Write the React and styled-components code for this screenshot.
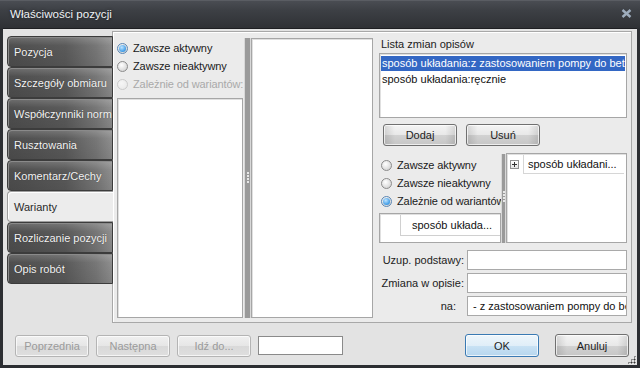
import React from "react";
import styled, { createGlobalStyle, css } from "styled-components";

const Global = createGlobalStyle`
  html, body { margin: 0; padding: 0; background: #2b2d31; }
  body { font-family: "Liberation Sans", Arial, sans-serif; font-size: 11px; }
  * { box-sizing: border-box; }
`;

const Window = styled.div`
  width: 640px;
  height: 368px;
  background: #2c2e32;
  display: flex;
  flex-direction: column;
  position: relative;
  overflow: hidden;
`;

const TitleBar = styled.div`
  height: 28px;
  flex: none;
  display: flex;
  align-items: center;
  justify-content: space-between;
  padding: 0 8px 2px 10px;
  background: linear-gradient(to bottom, #6a6d73 0px, #4a4d53 1px, #3d4045 10px, #2f3135 28px);
`;

const Title = styled.div`
  color: #eef2f6;
  font-size: 11.6px;
  text-shadow: 0 0 3px rgba(0, 0, 0, 0.6);
`;

const Body = styled.div`
  flex: 1;
  margin: 0 3px 3px 3px;
  background: #e3e3e3;
  border-top: 1px solid #1e1f22;
  display: flex;
  flex-direction: column;
  position: relative;
`;

const MainRow = styled.div`
  display: flex;
  padding: 2px 5px 0 4px;
  height: 295px;
`;

const Tabs = styled.div`
  width: 106px;
  flex: none;
  margin-top: 5px;
  margin-right: -1px;
  display: flex;
  flex-direction: column;
  position: relative;
  z-index: 2;
`;

const Tab = styled.div`
  height: 31px;
  display: flex;
  align-items: center;
  padding-left: 6px;
  border-radius: 4px 0 0 4px;
  font-size: 11px;
  white-space: nowrap;
  overflow: hidden;
  ${(p) =>
    p.$active
      ? css`
          background: #ececec;
          color: #2a2a2a;
          border: 1px solid #9e9e9e;
          border-right: none;
          box-shadow: inset 1px 1px 0 #ffffff;
        `
      : css`
          color: #f4f4f4;
          border: 1px solid #3c3c3c;
          background: linear-gradient(to bottom, rgba(255, 255, 255, 0.18), rgba(255, 255, 255, 0) 30%, rgba(0, 0, 0, 0.08) 100%),
            linear-gradient(to right, #4e4e4e 0%, #5a5a5a 55%, #777 85%, #8e8e8e 100%);
          box-shadow: inset 1px 1px 0 #8a8a8a;
          text-shadow: 0 0 1px rgba(0, 0, 0, 0.5);
        `}
`;

const Panel = styled.div`
  flex: 1;
  min-width: 0;
  height: 292px;
  background: #ebebeb;
  border: 1px solid #a8a8a8;
  box-shadow: inset 1px 1px 0 #ffffff;
  display: flex;
`;

const LeftCol = styled.div`
  width: 131px;
  flex: none;
  padding: 7px 0 4px 4px;
  display: flex;
  flex-direction: column;
`;

const RadioRow = styled.label`
  height: 18px;
  display: flex;
  align-items: center;
  gap: 5px;
  color: ${(p) => (p.$disabled ? "#a9a9a9" : "#1a1a1a")};
  white-space: nowrap;
  letter-spacing: -0.1px;
`;

const RadioCircle = styled.span`
  width: 11px;
  height: 11px;
  border-radius: 50%;
  flex: none;
  position: relative;
  border: 1px solid ${(p) => (p.$disabled ? "#cacaca" : "#8b8b8b")};
  background: ${(p) =>
    p.$disabled
      ? "radial-gradient(circle at 40% 35%, #f6f6f6, #e6e6e6)"
      : "radial-gradient(circle at 40% 35%, #ffffff, #d4d4d4 80%)"};
  ${(p) =>
    p.$checked &&
    css`
      border-color: #5a86b4;
      &::after {
        content: "";
        position: absolute;
        left: 1px;
        top: 1px;
        width: 7px;
        height: 7px;
        border-radius: 50%;
        background: radial-gradient(circle at 40% 35%, #bfe4ff, #3c9ae6 70%, #2a78c6);
      }
    `}
`;

const WhiteBox = styled.div`
  background: #ffffff;
  border: 1px solid #a6a6a6;
  box-shadow: inset 1px 1px 0 #e0e0e0;
`;

const LeftList = styled(WhiteBox)`
  margin-top: 5px;
  flex: 1;
  margin-right: 1px;
`;

const Splitter = styled.div`
  width: ${(p) => p.$w || 7}px;
  flex: none;
  display: flex;
  align-items: flex-start;
  justify-content: center;
  background: linear-gradient(to right, #d8d8d8 0, #d8d8d8 1px, #9a9a9a 1px, #9a9a9a calc(100% - 1px), #d8d8d8 calc(100% - 1px));
  margin: ${(p) => p.$m || "6px 0 4px 0"};
  padding-top: ${(p) => p.$dotTop || 134}px;
`;

const Dots = styled.div`
  display: flex;
  flex-direction: column;
  gap: 1px;
  & > span {
    width: 2px;
    height: 2px;
    background: #e8e8e8;
  }
`;

const MidBox = styled(WhiteBox)`
  width: 122px;
  flex: none;
  margin: 6px 0 4px 0;
`;

const RightCol = styled.div`
  flex: 1;
  min-width: 0;
  padding: 6px 4px 0 6px;
  display: flex;
  flex-direction: column;
`;

const GroupLabel = styled.div`
  height: 15px;
  padding-left: 2px;
  color: #222;
`;

const ChangeList = styled(WhiteBox)`
  height: 65px;
  padding: 2px 1px;
  display: flex;
  flex-direction: column;
  overflow: hidden;
`;

const ListItem = styled.div`
  height: 15px;
  line-height: 15px;
  padding-left: 1px;
  white-space: nowrap;
  overflow: hidden;
  color: ${(p) => (p.$selected ? "#ffffff" : "#111")};
  background: ${(p) => (p.$selected ? "#3367c4" : "transparent")};
  margin-bottom: 1px;
`;

const ButtonRow = styled.div`
  display: flex;
  gap: 9px;
  padding-left: 4px;
  margin-top: 6px;
`;

const Button = styled.button`
  width: ${(p) => p.$w || 74}px;
  height: ${(p) => p.$h || 22}px;
  margin-left: ${(p) => p.$ml || 0}px;
  flex: none;
  font-family: "Liberation Sans", Arial, sans-serif;
  font-size: 11px;
  padding: 0;
  border-radius: 3px;
  color: ${(p) => (p.disabled ? "#9b9b9b" : "#1e1e1e")};
  border: 1px solid ${(p) => (p.$default ? "#3a7ab3" : p.disabled ? "#b4b4b4" : "#707070")};
  background: ${(p) =>
    p.disabled
      ? "linear-gradient(to bottom, #f0f0f0 0%, #e6e6e6 50%, #d9d9d9 51%, #dedede 100%)"
      : p.$default
      ? "linear-gradient(to bottom, #eef6fb 0%, #e0eef8 50%, #c9e2f4 51%, #b6d6ee 100%)"
      : "linear-gradient(to right, rgba(0,0,0,0.12), rgba(0,0,0,0) 15%, rgba(0,0,0,0) 85%, rgba(0,0,0,0.12)), linear-gradient(to bottom, #f4f4f4 0%, #e8e8e8 50%, #d2d2d2 51%, #c6c6c6 100%)"};
  box-shadow: inset 0 0 0 1px rgba(255, 255, 255, 0.7);
`;

const VariantArea = styled.div`
  display: flex;
  margin-top: 7px;
  height: 90px;
`;

const VariantLeft = styled.div`
  width: 122px;
  flex: none;
  display: flex;
  flex-direction: column;
  padding: 3px 0 0 2px;
`;

const SmallBox = styled(WhiteBox)`
  margin: 3px 0 0 -2px;
  flex: 1;
  padding: 1px 0 0 20px;
`;

const Cell = styled.div`
  height: 21px;
  display: flex;
  align-items: center;
  padding-left: 11px;
  border-left: 1px solid #d0d0d0;
  border-bottom: 1px solid #d0d0d0;
  color: #111;
  white-space: nowrap;
`;

const TreeBox = styled(WhiteBox)`
  flex: 1;
  min-width: 0;
  padding: 1px 2px 0 3px;
`;

const TreeRow = styled.div`
  height: 19px;
  display: flex;
  align-items: center;
`;

const Expander = styled.span`
  width: 9px;
  height: 9px;
  flex: none;
  border: 1px solid #919191;
  background: linear-gradient(#fff, #e4e4e4);
  position: relative;
  margin-right: 4px;
  &::before {
    content: "";
    position: absolute;
    left: 1px;
    top: 3px;
    width: 5px;
    height: 1px;
    background: #333;
  }
  &::after {
    content: "";
    position: absolute;
    left: 3px;
    top: 1px;
    width: 1px;
    height: 5px;
    background: #333;
  }
`;

const TreeCell = styled.div`
  flex: 1;
  height: 19px;
  display: flex;
  align-items: center;
  padding-left: 4px;
  border-left: 1px solid #d6d6d6;
  border-bottom: 1px solid #d6d6d6;
  color: #111;
  white-space: nowrap;
`;

const Fields = styled.div`
  display: grid;
  grid-template-columns: 1fr 160px;
  row-gap: 3px;
  column-gap: 3px;
  margin-top: 7px;
`;

const FieldLabel = styled.div`
  text-align: right;
  align-self: center;
  color: #222;
  white-space: nowrap;
  padding-right: ${(p) => p.$pr || 0}px;
`;

const Input = styled.div`
  height: ${(p) => p.$h || 20}px;
  width: ${(p) => (p.$w ? `${p.$w}px` : "auto")};
  flex: none;
  background: #fff;
  border: 1px solid ${(p) => p.$border || "#a9a9a9"};
  padding: 0 5px;
  display: flex;
  align-items: center;
  white-space: nowrap;
  overflow: hidden;
  color: #111;
`;

const Footer = styled.div`
  display: flex;
  align-items: center;
  margin-top: 10px;
  padding: 0 8px 0 12px;
  gap: 7px;
`;

const Spacer = styled.div`
  flex: 1;
`;

const Grip = styled.div`
  position: absolute;
  right: 1px;
  bottom: 1px;
  width: 9px;
  height: 9px;
  background: radial-gradient(circle, #333 0.9px, transparent 1.1px) 0 0 / 3px 3px;
  clip-path: polygon(100% 0, 100% 100%, 0 100%);
`;

function Radio({ label, checked, disabled }) {
  return (
    <RadioRow $disabled={disabled}>
      <RadioCircle $checked={checked} $disabled={disabled} />
      {label}
    </RadioRow>
  );
}

const tabs = [
  "Pozycja",
  "Szczegóły obmiaru",
  "Współczynniki norm",
  "Rusztowania",
  "Komentarz/Cechy",
  "Warianty",
  "Rozliczanie pozycji",
  "Opis robót",
];

export default function App() {
  return (
    <>
      <Global />
      <Window>
        <TitleBar>
          <Title>Właściwości pozycji</Title>
          <svg width="11" height="9" viewBox="0 0 11 9">
            <path d="M1.5 1 L9.5 8 M9.5 1 L1.5 8" stroke="#9eadbd" strokeWidth="2.4" />
          </svg>
        </TitleBar>
        <Body>
          <MainRow>
            <Tabs>
              {tabs.map((t) => (
                <Tab key={t} $active={t === "Warianty"}>
                  {t}
                </Tab>
              ))}
            </Tabs>
            <Panel>
              <LeftCol>
                <Radio label="Zawsze aktywny" checked />
                <Radio label="Zawsze nieaktywny" />
                <Radio label="Zależnie od wariantów:" disabled />
                <LeftList />
              </LeftCol>
              <Splitter>
                <Dots>
                  <span />
                  <span />
                  <span />
                  <span />
                </Dots>
              </Splitter>
              <MidBox />
              <RightCol>
                <GroupLabel>Lista zmian opisów</GroupLabel>
                <ChangeList>
                  <ListItem $selected>sposób układania:z zastosowaniem pompy do betonu</ListItem>
                  <ListItem>sposób układania:ręcznie</ListItem>
                </ChangeList>
                <ButtonRow>
                  <Button>Dodaj</Button>
                  <Button>Usuń</Button>
                </ButtonRow>
                <VariantArea>
                  <VariantLeft>
                    <Radio label="Zawsze aktywny" />
                    <Radio label="Zawsze nieaktywny" />
                    <Radio label="Zależnie od wariantów" checked />
                    <SmallBox>
                      <Cell>sposób układa...</Cell>
                    </SmallBox>
                  </VariantLeft>
                  <Splitter $w={5} $m="1px 0 0 0" $dotTop={37}>
                    <Dots>
                      <span />
                      <span />
                      <span />
                      <span />
                    </Dots>
                  </Splitter>
                  <TreeBox>
                    <TreeRow>
                      <Expander />
                      <TreeCell>sposób układani...</TreeCell>
                    </TreeRow>
                  </TreeBox>
                </VariantArea>
                <Fields>
                  <FieldLabel>Uzup. podstawy:</FieldLabel>
                  <Input />
                  <FieldLabel>Zmiana w opisie:</FieldLabel>
                  <Input />
                  <FieldLabel $pr={8}>na:</FieldLabel>
                  <Input>- z zastosowaniem pompy do betonu</Input>
                </Fields>
              </RightCol>
            </Panel>
          </MainRow>
          <Footer>
            <Button disabled>Poprzednia</Button>
            <Button disabled>Następna</Button>
            <Button disabled>Idź do...</Button>
            <Input $w={85} $h={19} $border="#8a8a8a" />
            <Spacer />
            <Button $default $h={23}>OK</Button>
            <Button $h={23} $ml={9}>Anuluj</Button>
          </Footer>
          <Grip />
        </Body>
      </Window>
    </>
  );
}
